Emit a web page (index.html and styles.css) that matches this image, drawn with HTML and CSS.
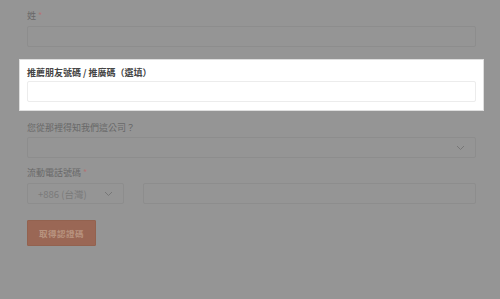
FILE: index.html
```html
<!DOCTYPE html>
<html>
<head>
    <title>註冊</title>
    <link rel="stylesheet" href="styles.css">
</head>
<body>
    <form class="signup">
        <div class="field">
            <label>姓 <span class="req">*</span></label>
            <div class="input"></div>
        </div>

        <div class="field highlight">
            <label>推薦朋友號碼 / 推廣碼（選填）</label>
            <div class="input"></div>
        </div>

        <div class="field source">
            <label>您從那裡得知我們這公司？</label>
            <div class="input select">
                <svg class="chevron" width="9" height="6" viewBox="0 0 9 6"><polyline points="1,1 4.5,4.5 8,1" fill="none" stroke="currentColor" stroke-width="1"/></svg>
            </div>
        </div>

        <div class="field">
            <label>流動電話號碼 <span class="req">*</span></label>
            <div class="phone-row">
                <div class="input select code">
                    <span>+886 (台灣)</span>
                    <svg class="chevron" width="9" height="6" viewBox="0 0 9 6"><polyline points="1,1 4.5,4.5 8,1" fill="none" stroke="currentColor" stroke-width="1"/></svg>
                </div>
                <div class="input number"></div>
            </div>
        </div>

        <button type="button" class="send">取得認證碼</button>
    </form>
</body>
</html>
```

FILE: styles.css
```css
body {
    margin: 0;
    background: #959595;
    font-family: "Noto Sans CJK TC", "Noto Sans", sans-serif;
}
.signup {
    width: 449px;
    padding: 10px 0 0 27px;
    display: flex;
    flex-direction: column;
}
.field {
    display: flex;
    flex-direction: column;
    margin-bottom: 12px;
}
.field label {
    font-size: 9px;
    line-height: 12px;
    height: 12px;
    color: #686868;
    margin-bottom: 4px;
}
.req {
    color: #b07575;
}
.input {
    box-sizing: border-box;
    height: 21px;
    border: 1px solid #8d8d8d;
    border-radius: 2px;
}
.select {
    display: flex;
    align-items: center;
    justify-content: flex-end;
    padding: 0 10px;
}
.chevron {
    color: #777;
}
.highlight {
    background: #fff;
    border: 1px solid #dedede;
    margin: 0 -8px 11px;
    padding: 7px 7px 8px;
}
.highlight label {
    color: #444;
    font-weight: bold;
    margin-bottom: 2px;
}
.highlight .input {
    border-color: #ececec;
}
.source {
    margin-bottom: 9px;
}
.source label {
    margin-bottom: 3px;
}
.phone-row {
    display: flex;
    gap: 19px;
}
.code {
    width: 97px;
    justify-content: space-between;
    padding: 0 10px;
    font-size: 9.5px;
    color: #7a7a7a;
}
.number {
    flex: 1;
}
.send {
    align-self: flex-start;
    margin-top: 4px;
    width: 69px;
    height: 26px;
    border: 1px solid #93624f;
    background: #9a6755;
    color: #b8937f;
    font-family: inherit;
    font-size: 8.5px;
    font-weight: bold;
    letter-spacing: 0.5px;
    padding: 0;
    border-radius: 1px;
}
```
